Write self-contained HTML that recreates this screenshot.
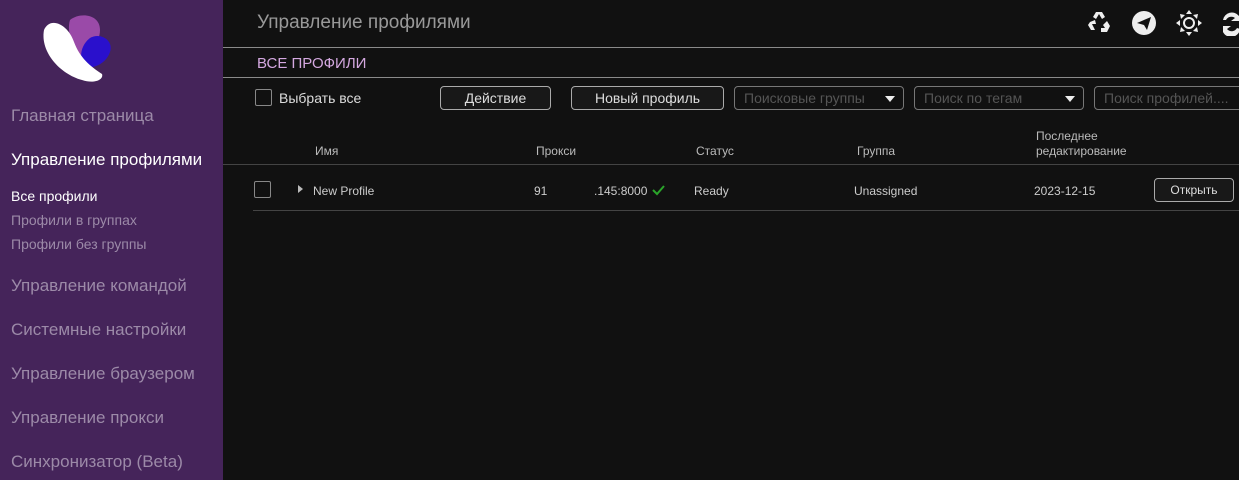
<!DOCTYPE html>
<html><head><meta charset="utf-8"><style>
*{margin:0;padding:0;box-sizing:border-box}
body{width:1239px;height:480px;background:#111111;font-family:"Liberation Sans","Noto Sans CJK SC",sans-serif;position:relative;overflow:hidden;color:#ddd}
#sb{position:absolute;left:0;top:0;width:223px;height:480px;background:#45245a}
.a{position:absolute;white-space:nowrap}
.nav{left:11px;font-size:17px;color:#9c8aa8}
.sub{left:11px;font-size:14px;color:#9c8aa8}
.hl{position:absolute;height:1px;background:#8a8a8a}
.btn{position:absolute;border:1px solid #aaa;border-radius:4px;color:#ddd;font-size:14px;text-align:center;line-height:22px;height:24px;background:#181818}
.sel{position:absolute;border:1px solid #777;border-radius:4px;color:#555;font-size:14px;line-height:22px;height:24px;padding-left:9px}
.tri{position:absolute;right:8px;top:9px;width:0;height:0;border-left:5px solid transparent;border-right:5px solid transparent;border-top:6px solid #eee}
.th{font-size:12px;color:#bbb}
.td{font-size:12px;color:#ccc}
.cb{position:absolute;width:17px;height:17px;border:1.5px solid #888;border-radius:2px}
</style></head><body>
<div id="sb">
<svg class="a" style="left:38px;top:12px" width="80" height="72" viewBox="0 0 80 72">
<path d="M32 8 C42 0 62 2 62 18 C62 32 50 40 44 46 C36 40 28 20 32 8Z" fill="#9a4aa8"/>
<path d="M52 26 C62 20 76 28 72 40 C68 52 54 58 46 54 C40 44 44 32 52 26Z" fill="#2a10cc"/>
<path d="M6 18 C12 4 30 12 36 30 C42 46 52 54 64 62 C66 68 56 72 44 68 C22 62 2 40 6 18Z" fill="#ffffff"/>
</svg>
<div class="a nav" style="top:106px">Главная страница</div>
<div class="a nav" style="top:150px;color:#fff">Управление профилями</div>
<div class="a sub" style="top:188px;color:#fff">Все профили</div>
<div class="a sub" style="top:212px">Профили в группах</div>
<div class="a sub" style="top:236px">Профили без группы</div>
<div class="a nav" style="top:276px">Управление командой</div>
<div class="a nav" style="top:320px">Системные настройки</div>
<div class="a nav" style="top:364px">Управление браузером</div>
<div class="a nav" style="top:408px">Управление прокси</div>
<div class="a nav" style="top:452px">Синхронизатор (Beta)</div>
</div>
<div class="a" style="left:257px;top:12px;font-size:19px;color:#999">Управление профилями</div>
<svg class="a" style="left:1087px;top:10px" width="152" height="26" viewBox="0 0 152 26">
<g fill="#eee">
<path d="M9 2h6l3 5-3 2-3-5-3 5-3-2z M3 12l5-2 1 4-4 0 3 6H4L1 15z M20 11l3 5-3 6h-6v-4h4l-2-3z"/>
<circle cx="57" cy="13" r="12"/>
<circle cx="102" cy="13" r="6"/>
<path d="M102 0l3 4h-6zM102 26l-3-4h6zM89 13l4-3v6zM115 13l-4 3v-6zM93 4l5 1-4 4zM111 22l-5-1 4-4zM111 4l-1 5-4-4zM93 22l1-5 4 4z"/>
<path d="M136 10a9 9 0 0 1 16-4l0-4 0 9-8 0 4-3a6 6 0 0 0-9 2z M136 16l8 0-4 3a6 6 0 0 0 10-1l3 1a9 9 0 0 1-17 3l0 3z"/>
</g>
<path d="M50 13l14-6-4 13-3-5z" fill="#111"/>
<circle cx="102" cy="13" r="4" fill="#111"/>
</svg>
<div class="hl" style="left:223px;top:47px;width:1016px"></div>
<div class="a" style="left:257px;top:55px;font-size:15px;color:#d4a8e0">ВСЕ ПРОФИЛИ</div>
<div class="hl" style="left:223px;top:77px;width:1016px"></div>
<div class="cb" style="left:255px;top:89px"></div>
<div class="a" style="left:279px;top:90px;font-size:14px;color:#ddd">Выбрать все</div>
<div class="btn" style="left:440px;top:86px;width:111px">Действие</div>
<div class="btn" style="left:571px;top:86px;width:153px">Новый профиль</div>
<div class="sel" style="left:734px;top:86px;width:170px">Поисковые группы<div class="tri"></div></div>
<div class="sel" style="left:914px;top:86px;width:170px">Поиск по тегам<div class="tri"></div></div>
<div class="sel" style="left:1094px;top:86px;width:160px">Поиск профилей....</div>
<div class="a th" style="left:315px;top:144px">Имя</div>
<div class="a th" style="left:536px;top:144px">Прокси</div>
<div class="a th" style="left:696px;top:144px">Статус</div>
<div class="a th" style="left:857px;top:144px">Группа</div>
<div class="a th" style="left:1036px;top:129px;line-height:15px">Последнее<br>редактирование</div>
<div class="hl" style="left:223px;top:164px;width:1016px;background:#444"></div>
<div class="cb" style="left:254px;top:181px"></div>
<div class="a" style="left:298px;top:185px;width:0;height:0;border-top:4px solid transparent;border-bottom:4px solid transparent;border-left:5px solid #bbb"></div>
<div class="a td" style="left:313px;top:184px">New Profile</div>
<div class="a td" style="left:534px;top:184px">91</div>
<div class="a td" style="left:594px;top:184px">.145:8000</div>
<svg class="a" style="left:651px;top:184px" width="14" height="12"><path d="M2 6l4 4 7-8" stroke="#2aa52a" stroke-width="2" fill="none"/></svg>
<div class="a td" style="left:694px;top:184px">Ready</div>
<div class="a td" style="left:854px;top:184px">Unassigned</div>
<div class="a td" style="left:1034px;top:184px">2023-12-15</div>
<div class="btn" style="left:1154px;top:178px;width:80px;font-size:12px;line-height:22px">Открыть</div>
<div class="hl" style="left:253px;top:210px;width:986px;background:#444"></div>
</body></html>
